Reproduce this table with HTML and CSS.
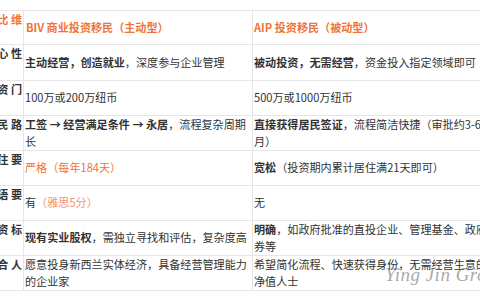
FILE: index.html
```html
<!DOCTYPE html>
<html lang="zh">
<head>
<meta charset="utf-8">
<link rel="stylesheet" href="styles.css">
</head>
<body>
<div class="page">
  <div class="grid">
    <div class="c lab head">比 维</div>
    <div class="c v head-t">BIV 商业投资移民（主动型）</div>
    <div class="c v last head-t">AIP 投资移民（被动型）</div>

    <div class="c lab r2">心 性</div>
    <div class="c v r2"><span><b>主动经营，创造就业</b>，深度参与企业管理</span></div>
    <div class="c v last r2"><span><b>被动投资，无需经营</b>，资金投入指定领域即可</span></div>

    <div class="c lab">资 门</div>
    <div class="c v"><span>100万或200万纽币</span></div>
    <div class="c v last"><span>500万或1000万纽币</span></div>

    <div class="c lab">民 路</div>
    <div class="c v"><span><b>工签 → 经营满足条件 → 永居</b>，流程复杂周期长</span></div>
    <div class="c v last"><span><b>直接获得居民签证</b>，流程简洁快捷（审批约3-6个月）</span></div>

    <div class="c lab">住 要</div>
    <div class="c v"><span class="org">严格（每年184天）</span></div>
    <div class="c v last"><span><b>宽松</b>（投资期内累计居住满21天即可）</span></div>

    <div class="c lab">语 要</div>
    <div class="c v"><span>有<span class="org2">（雅思5分）</span></span></div>
    <div class="c v last"><span>无</span></div>

    <div class="c lab">资 标</div>
    <div class="c v clip"><span class="one"><b>现有实业股权</b>，需独立寻找和评估，复杂度高</span></div>
    <div class="c v last"><span><b>明确</b>，如政府批准的直投企业、管理基金、政府债券等</span></div>

    <div class="c lab">合 人</div>
    <div class="c v"><span>愿意投身新西兰实体经济，具备经营管理能力的企业家</span></div>
    <div class="c v last"><span>希望简化流程、快速获得身份，无需经营生意的高净值人士</span></div>
  </div>
  <div class="mark">Ying Jin Group</div>
</div>
</body>
</html>
```

FILE: styles.css
```css
html, body {
  margin: 0;
  padding: 0;
  background: #ffffff;
  overflow: hidden;
}
.page {
  position: relative;
  width: 480px;
  height: 300px;
  overflow: hidden;
  padding-top: 10px;
  box-sizing: border-box;
  font-family: "Noto Sans CJK SC", "Liberation Sans", sans-serif;
  font-size: 11.1px;
  color: #333333;
}
.grid {
  display: grid;
  grid-template-columns: 24px 229px 250px;
  grid-template-rows: 34px 36px repeat(6, 35px);
  border-top: 1px solid #e6e6e6;
  width: 503px;
}
.c {
  display: flex;
  align-items: center;
  border-bottom: 1px solid #e6e6e6;
  box-sizing: border-box;
  min-width: 0;
}
.v {
  border-right: 1px solid #e6e6e6;
  padding: 0 0 0 1px;
  line-height: 17.5px;
}
.v.last {
  border-right: none;
  padding: 0 1px;
}
.clip {
  overflow: hidden;
}
.one {
  white-space: nowrap;
  flex-shrink: 0;
}
.lab {
  border-right: 1px solid #e6e6e6;
  align-items: flex-start;
  justify-content: flex-end;
  white-space: nowrap;
  overflow: hidden;
  font-weight: 700;
  line-height: 17px;
  padding-right: 1px;
  color: #333333;
}
.lab.head {
  color: #f0743a;
}
.head-t {
  color: #f0743a;
  font-weight: 700;
  padding-left: 2px;
}
b {
  font-weight: 700;
}
.org {
  color: #f0743a;
}
.org2 {
  color: #f4946a;
}
.mark {
  position: absolute;
  left: 385px;
  top: 264px;
  font-family: "Liberation Serif", serif;
  font-style: italic;
  font-size: 19px;
  color: rgba(110, 110, 110, 0.6);
  white-space: nowrap;
  letter-spacing: 0.5px;
}
```
